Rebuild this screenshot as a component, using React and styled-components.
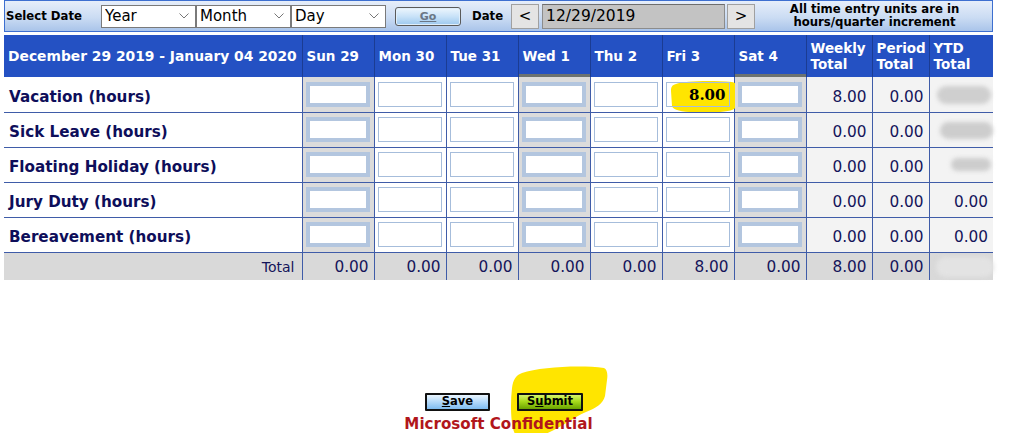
import React from 'react';
import styled, { createGlobalStyle } from 'styled-components';

const Global = createGlobalStyle`
  html, body { margin: 0; padding: 0; background: #fff; }
  body { font-family: "DejaVu Sans", Verdana, sans-serif; }
`;

const Page = styled.div`
  width: 989px;
  margin-left: 4px;
`;

const Toolbar = styled.div`
  display: flex;
  align-items: center;
  height: 30px;
  border: 1px solid #3d6fd0;
  background: linear-gradient(#e6eefa, #cbdcf3 55%, #a9c4ea);
`;

const ToolLabel = styled.span`
  font-weight: bold;
  font-size: 11.7px;
  color: #000;
  margin-left: ${(p) => p.$ml || 0}px;
  width: ${(p) => (p.$w ? `${p.$w}px` : 'auto')};
  flex: none;
`;

const SelectWrap = styled.div`
  position: relative;
  width: 95px;
  height: 23px;
  flex: none;
`;

const Select = styled.select`
  appearance: none;
  -webkit-appearance: none;
  width: 100%;
  height: 100%;
  box-sizing: border-box;
  border: 1px solid #7a7a7a;
  border-radius: 0;
  background: #fff;
  font-family: "DejaVu Sans", Verdana, sans-serif;
  font-size: 15px;
  color: #000;
  padding: 0 0 0 3px;
  margin: 0;
  outline: none;
`;

const Chevron = styled.svg`
  position: absolute;
  right: 7px;
  top: 8px;
  pointer-events: none;
`;

const GoButton = styled.button`
  flex: none;
  margin-left: 9px;
  width: 66px;
  height: 19px;
  box-sizing: border-box;
  border: 1px solid #5a5a5a;
  border-radius: 3px;
  background: linear-gradient(#eef6fd, #c8e2f8 50%, #9cc8ef);
  box-shadow: inset 0 0 0 1px #dfeefb;
  font-family: "DejaVu Sans", Verdana, sans-serif;
  font-weight: bold;
  font-size: 11px;
  color: #6a7686;
  padding: 0;
  text-decoration: underline;
`;

const NavButton = styled.button`
  flex: none;
  margin-left: ${(p) => p.$ml}px;
  width: ${(p) => p.$w}px;
  height: 25px;
  box-sizing: border-box;
  border: 1px solid #a0a0a0;
  background: #e4e4e4;
  font-family: "DejaVu Sans", Verdana, sans-serif;
  font-size: 15px;
  color: #000;
  padding: 0;
`;

const DateField = styled.input`
  flex: none;
  margin-left: 3px;
  width: 183px;
  height: 25px;
  box-sizing: border-box;
  border: 1px solid #8c8c8c;
  border-top-color: #6d6d6d;
  background: #c3c3c3;
  font-family: "DejaVu Sans", Verdana, sans-serif;
  font-size: 15.5px;
  color: #000;
  padding: 0 0 0 3px;
  outline: none;
`;

const Notice = styled.div`
  flex: 1;
  text-align: center;
  font-weight: bold;
  font-size: 11.7px;
  line-height: 13px;
  color: #000;
  padding-left: 2px;
`;

const Grid = styled.table`
  margin-top: 3px;
  width: 989px;
  border-collapse: collapse;
  table-layout: fixed;
`;

const HeadRow = styled.tr`
  height: 42px;
  background: #2451c3;
`;

const HeadCell = styled.th`
  color: #fff;
  font-weight: bold;
  font-size: ${(p) => (p.$first ? 13.85 : 13.5)}px;
  line-height: 16px;
  text-align: left;
  vertical-align: middle;
  padding: 0 0 0 4px;
  border-left: ${(p) => (p.$first ? 'none' : '1px solid #1b3c92')};
  box-shadow: ${(p) => (p.$bar ? 'inset 0 -3px 0 #6c7270' : 'none')};
  white-space: nowrap;
`;

const Row = styled.tr`
  height: ${(p) => (p.$total ? 28 : 35)}px;
  background: ${(p) => (p.$total ? '#d9d9d9' : '#fff')};
`;

const LabelCell = styled.td`
  font-weight: bold;
  font-size: 15.2px;
  color: #0e0e5a;
  padding: 5px 0 0 5px;
  border-bottom: 1px solid #3f5ca8;
  white-space: nowrap;
`;

const TotalLabel = styled.td`
  font-size: 14px;
  color: #14145a;
  text-align: right;
  padding: 2px 7px 0 0;
`;

const DayCell = styled.td`
  position: relative;
  padding: 0 0 0 3px;
  background: ${(p) => (p.$shade ? '#dbdbdb' : 'transparent')};
  border: 1px solid #3f5ca8;
  border-top: none;
  vertical-align: middle;
`;

const Entry = styled.input`
  position: relative;
  z-index: 1;
  display: block;
  width: 64px;
  height: 25px;
  box-sizing: border-box;
  border: ${(p) => (p.$thick ? '4px solid #b3c6df' : '1px solid #a6bddb')};
  background: ${(p) => (p.$clear ? 'transparent' : '#fff')};
  font-family: "DejaVu Serif", "Liberation Serif", serif;
  font-weight: bold;
  font-size: 15px;
  color: #000;
  text-align: right;
  padding: 2px 3px 0 0;
  margin: 0;
  outline: none;
`;

const ValueCell = styled.td`
  position: relative;
  font-size: 15.3px;
  color: #14145a;
  text-align: right;
  padding: ${(p) => (p.$light ? 5 : 2)}px 5px 0 0;
  background: ${(p) => (p.$light ? '#f3f3f3' : 'transparent')};
  border-left: 1px solid #3f5ca8;
  border-bottom: ${(p) => (p.$light ? '1px solid #3f5ca8' : 'none')};
  white-space: nowrap;
`;

const Blur = styled.div`
  position: absolute;
  left: ${(p) => p.$x}px;
  top: ${(p) => p.$y}px;
  width: ${(p) => p.$w}px;
  height: ${(p) => p.$h}px;
  border-radius: 10px;
  background: ${(p) => p.$c};
  filter: blur(2px);
`;

const Marker = styled.svg`
  position: absolute;
  left: ${(p) => p.$x}px;
  top: ${(p) => p.$y}px;
  z-index: 0;
  pointer-events: none;
`;

const Footer = styled.div`
  margin-top: 110px;
  display: flex;
  flex-direction: column;
  align-items: center;
`;

const ButtonRow = styled.div`
  display: flex;
  gap: 27px;
  padding-left: 11px;
`;

const ButtonSlot = styled.div`
  position: relative;
`;

const ActionButton = styled.button`
  position: relative;
  z-index: 1;
  width: ${(p) => p.$w}px;
  height: 18px;
  box-sizing: border-box;
  border: 2px solid #111;
  border-radius: 1px;
  background: ${(p) =>
    p.$green
      ? 'linear-gradient(#d6f56a, #a8db1c 45%, #6aa300)'
      : 'linear-gradient(#eaf5fe, #b9dcfa 45%, #7fbcf0)'};
  font-family: "DejaVu Sans", Verdana, sans-serif;
  font-weight: bold;
  font-size: 11.5px;
  line-height: 13px;
  color: #000;
  padding: 0;
  u { text-decoration: underline; }
`;

const Confidential = styled.div`
  position: relative;
  z-index: 2;
  margin-top: 4px;
  font-weight: bold;
  font-size: 15.1px;
  color: #b1161c;
`;

const days = [
  { label: 'Sun 29', shade: true },
  { label: 'Mon 30' },
  { label: 'Tue 31' },
  { label: 'Wed 1', shade: true, bar: true },
  { label: 'Thu 2' },
  { label: 'Fri 3' },
  { label: 'Sat 4', shade: true, bar: true },
];

const rows = [
  { label: 'Vacation (hours)', weekly: '8.00', period: '0.00', ytd: { x: 7, y: 9, w: 54, h: 18, c: '#cfcfcf' } },
  { label: 'Sick Leave (hours)', weekly: '0.00', period: '0.00', ytd: { x: 10, y: 9, w: 53, h: 17, c: '#cdcdcd' } },
  { label: 'Floating Holiday (hours)', weekly: '0.00', period: '0.00', ytd: { x: 21, y: 10, w: 40, h: 13, c: '#cdcdcd' } },
  { label: 'Jury Duty (hours)', weekly: '0.00', period: '0.00', ytd: '0.00' },
  { label: 'Bereavement (hours)', weekly: '0.00', period: '0.00', ytd: '0.00' },
];

const totals = ['0.00', '0.00', '0.00', '0.00', '0.00', '8.00', '0.00'];

function DropDown({ label }) {
  return (
    <SelectWrap>
      <Select defaultValue="">
        <option value="">{label}</option>
      </Select>
      <Chevron width="10" height="6" viewBox="0 0 10 6">
        <path d="M0.5 0.5 L5 5 L9.5 0.5" fill="none" stroke="#777" strokeWidth="1" />
      </Chevron>
    </SelectWrap>
  );
}

export default function App() {
  return (
    <Page>
      <Global />
      <Toolbar>
        <ToolLabel $ml={1} $w={95}>Select Date</ToolLabel>
        <DropDown label="Year" />
        <DropDown label="Month" />
        <DropDown label="Day" />
        <GoButton>Go</GoButton>
        <ToolLabel $ml={11}>Date</ToolLabel>
        <NavButton $ml={8} $w={28}>&lt;</NavButton>
        <DateField defaultValue="12/29/2019" readOnly />
        <NavButton $ml={2} $w={28}>&gt;</NavButton>
        <Notice>
          All time entry units are in
          <br />
          hours/quarter increment
        </Notice>
      </Toolbar>

      <Grid>
        <colgroup>
          <col style={{ width: 298 }} />
          {days.map((d) => (
            <col key={d.label} style={{ width: 72 }} />
          ))}
          <col style={{ width: 66 }} />
          <col style={{ width: 57 }} />
          <col style={{ width: 64 }} />
        </colgroup>
        <thead>
          <HeadRow>
            <HeadCell $first>December 29 2019 - January 04 2020</HeadCell>
            {days.map((d) => (
              <HeadCell key={d.label} $bar={d.bar}>
                {d.label}
              </HeadCell>
            ))}
            <HeadCell>
              Weekly
              <br />
              Total
            </HeadCell>
            <HeadCell>
              Period
              <br />
              Total
            </HeadCell>
            <HeadCell>
              YTD
              <br />
              Total
            </HeadCell>
          </HeadRow>
        </thead>
        <tbody>
          {rows.map((r, ri) => (
            <Row key={r.label}>
              <LabelCell>{r.label}</LabelCell>
              {days.map((d, di) => {
                const marked = ri === 0 && di === 5;
                return (
                  <DayCell key={d.label} $shade={d.shade}>
                    {marked && (
                      <Marker $x={7} $y={2} width="68" height="33" viewBox="0 0 68 33">
                        <path
                          d="M6 5 C14 2 40 1 62 3 C67 4 68 8 68 14 L67 26 C66 31 58 33 46 33 L24 33 C12 33 3 31 2 27 L1 12 C1 8 2 6 6 5 Z"
                          fill="#ffe500"
                        />
                      </Marker>
                    )}
                    <Entry
                      $thick={d.shade}
                      $clear={marked}
                      defaultValue={marked ? '8.00' : ''}
                    />
                  </DayCell>
                );
              })}
              <ValueCell $light>{r.weekly}</ValueCell>
              <ValueCell $light>{r.period}</ValueCell>
              <ValueCell $light>
                {typeof r.ytd === 'string' ? (
                  r.ytd
                ) : (
                  <Blur $x={r.ytd.x} $y={r.ytd.y} $w={r.ytd.w} $h={r.ytd.h} $c={r.ytd.c} />
                )}
              </ValueCell>
            </Row>
          ))}
          <Row $total>
            <TotalLabel>Total</TotalLabel>
            {totals.map((t, i) => (
              <ValueCell key={i}>{t}</ValueCell>
            ))}
            <ValueCell>8.00</ValueCell>
            <ValueCell>0.00</ValueCell>
            <ValueCell>
              <Blur $x={6} $y={4} $w={58} $h={20} $c="#e3e3e3" />
            </ValueCell>
          </Row>
        </tbody>
      </Grid>

      <Footer>
        <ButtonRow>
          <ButtonSlot>
            <ActionButton $w={65}>
              <u>S</u>ave
            </ActionButton>
          </ButtonSlot>
          <ButtonSlot>
            <Marker $x={-7} $y={-24} width="98" height="72" viewBox="0 0 98 72">
              <path
                d="M12 7 C30 1 70 -1 94 2 C97 3 98 8 97 14 L95 30 C93 38 86 42 76 46 C62 52 48 64 30 70 C22 72 10 72 5 68 C1 60 0 40 2 22 C3 14 6 9 12 7 Z"
                fill="#ffe500"
              />
            </Marker>
            <ActionButton $w={66} $green>
              S<u>u</u>bmit
            </ActionButton>
          </ButtonSlot>
        </ButtonRow>
        <Confidential>Microsoft Confidential</Confidential>
      </Footer>
    </Page>
  );
}
